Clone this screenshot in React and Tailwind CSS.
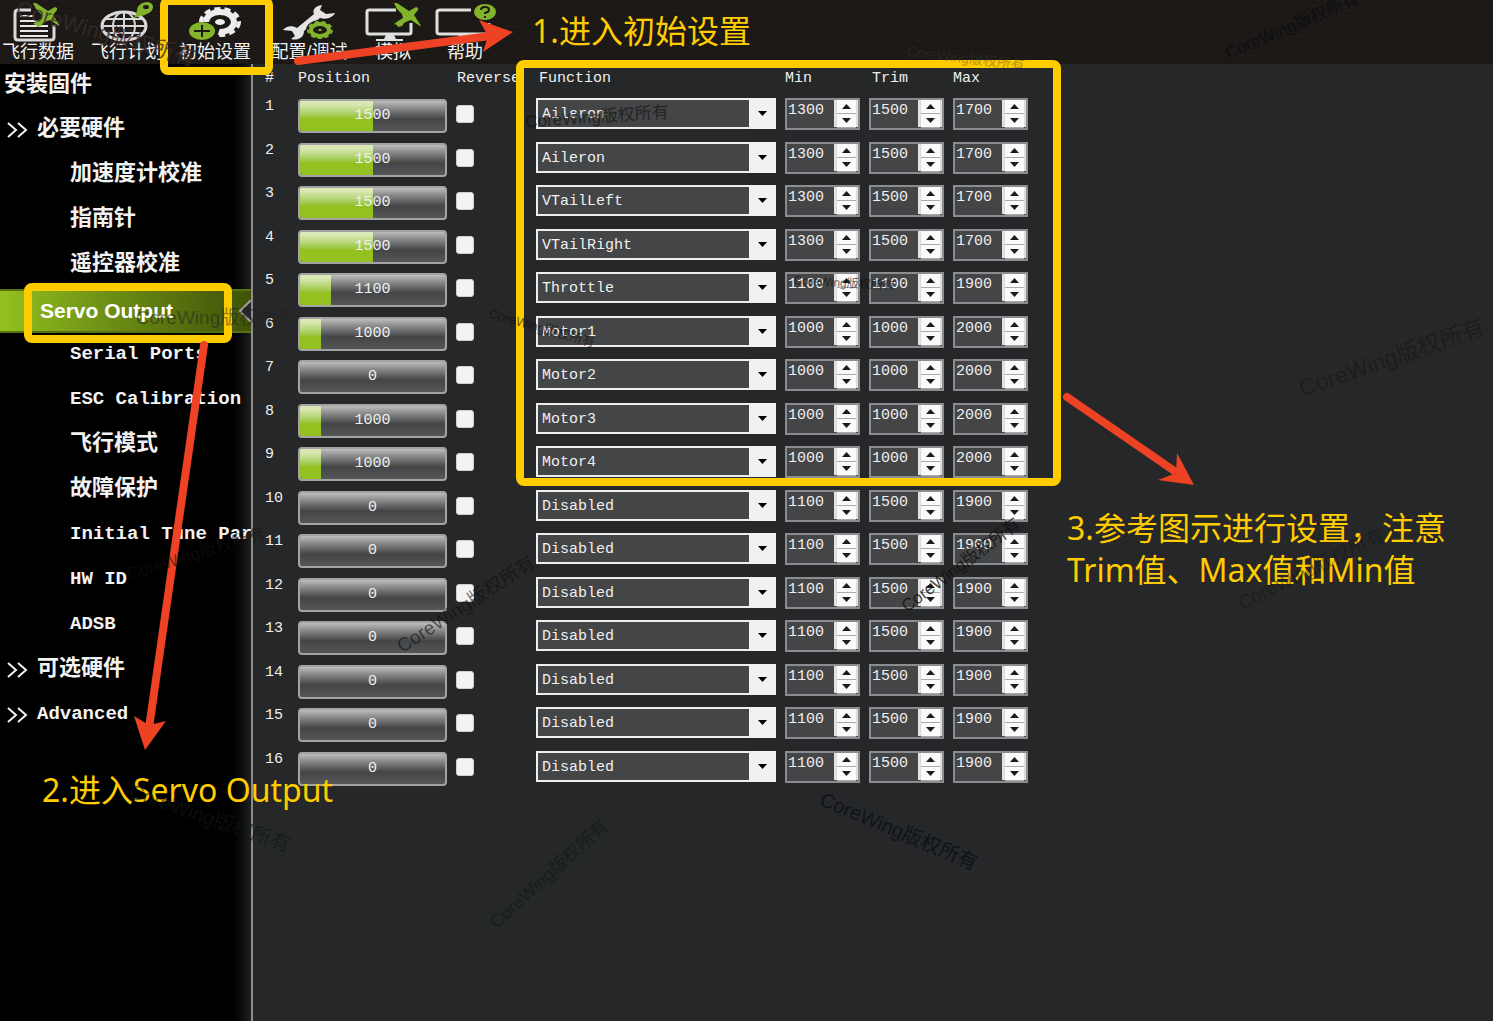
import React, { useState } from 'react';

const FUNCTIONS = [
  'Disabled', 'Aileron', 'VTailLeft', 'VTailRight', 'Throttle',
  'Motor1', 'Motor2', 'Motor3', 'Motor4',
];

const SERVOS = [
  { position: 1500, fn: 'Aileron', min: 1300, trim: 1500, max: 1700 },
  { position: 1500, fn: 'Aileron', min: 1300, trim: 1500, max: 1700 },
  { position: 1500, fn: 'VTailLeft', min: 1300, trim: 1500, max: 1700 },
  { position: 1500, fn: 'VTailRight', min: 1300, trim: 1500, max: 1700 },
  { position: 1100, fn: 'Throttle', min: 1100, trim: 1100, max: 1900 },
  { position: 1000, fn: 'Motor1', min: 1000, trim: 1000, max: 2000 },
  { position: 0, fn: 'Motor2', min: 1000, trim: 1000, max: 2000 },
  { position: 1000, fn: 'Motor3', min: 1000, trim: 1000, max: 2000 },
  { position: 1000, fn: 'Motor4', min: 1000, trim: 1000, max: 2000 },
  ...Array.from({ length: 7 }, () => ({ position: 0, fn: 'Disabled', min: 1100, trim: 1500, max: 1900 })),
];

// x / y is the centre of each mark
const WATERMARKS = [
  { x: 106, y: 34, angle: 16, size: 22, color: '#3a2c2ccc' },
  { x: 1292, y: 26, angle: -23, size: 17, color: '#0f0e16' },
  { x: 966, y: 58, angle: 7, size: 14, color: '#3c383566' },
  { x: 597, y: 117, angle: -4, size: 17, color: '#101010aa' },
  { x: 216, y: 317, angle: 0, size: 19, color: '#20202080' },
  { x: 542, y: 328, angle: 16, size: 13, color: '#101010aa' },
  { x: 844, y: 283, angle: 3, size: 12, color: '#101010aa' },
  { x: 466, y: 604, angle: -33, size: 19, color: '#10101099' },
  { x: 961, y: 565, angle: -37, size: 17, color: '#101010cc' },
  { x: 1392, y: 358, angle: -19, size: 23, color: '#221b1c' },
  { x: 1311, y: 569, angle: -26, size: 19, color: '#10101066' },
  { x: 899, y: 831, angle: 23, size: 20, color: '#10131c' },
  { x: 549, y: 874, angle: -42, size: 18, color: '#162016' },
  { x: 210, y: 818, angle: 19, size: 20, color: '#10181099' },
  { x: 196, y: 554, angle: -17, size: 17, color: '#12121299' },
];

const PLANE = 'm30 3 3 0 6 4 6 4 7-4 2 1 0 2-4 5 2 3 5 8-1 0-9-6-3 1-4 2-2 3-4 1-1-2-3-1 4-3 5-3-1-4-5-5z';

const DataIcon = () => (
  <svg width="54" height="42" viewBox="0 0 54 42" fill="none">
    <path d="M20 10H7q-3 0-3 3v24q0 3 3 3h33q3 0 3-3V25" stroke="#d9d9d9" strokeWidth="3" />
    <path d="M9 16h14M9 21h18M9 26h28M9 31h28M9 36h28" stroke="#e8e8e8" strokeWidth="2" />
    <path d={PLANE} transform="translate(-8 0)" fill="#83b32a" />
  </svg>
);

const PlanIcon = () => (
  <svg width="54" height="42" viewBox="0 0 54 42" fill="none">
    <g stroke="#d9d9d9" strokeWidth="2">
      <ellipse cx="24" cy="26" rx="22" ry="14" strokeWidth="3" />
      <ellipse cx="24" cy="26" rx="11" ry="14" />
      <path d="M24 12v28M2 26h44M6 19h36M6 33h36" />
    </g>
    <path d="M34 18c5-2 10-2 15-5 6-4 5-10-1-11-7 0-11 4-11 9z" fill="#83b32a" />
    <ellipse cx="46" cy="7" rx="3" ry="2" fill="#1c1917" />
  </svg>
);

const SetupIcon = () => (
  <svg width="54" height="42" viewBox="0 0 54 42" fill="none">
    <ellipse cx="32" cy="22" rx="14" ry="10" stroke="#ececec" strokeWidth="6" />
    <ellipse cx="32" cy="22" rx="19" ry="13" stroke="#ececec" strokeWidth="4" strokeDasharray="6 4" />
    <path d="M12 22h16l4 6-4 12H12z" fill="#1c1917" />
    <ellipse cx="32" cy="22" rx="5" ry="3" fill="#ececec" />
    <ellipse cx="14" cy="31" rx="13" ry="9" fill="#83b32a" />
    <path d="M6 31h16M14 25v12" stroke="#1c1917" strokeWidth="2" />
  </svg>
);

const TuneIcon = () => (
  <svg width="54" height="42" viewBox="0 0 54 42" fill="none">
    <path d="M40 5c-7 1-10 5-8 9L15 28c-5-3-11-2-14 2l9 1 3 5-4 3c6 2 13-1 13-8l16-13c7 2 13-1 15-5l-9 1-6-4z" fill="#e4e4e4" />
    <ellipse cx="38" cy="30" rx="14" ry="10" fill="#1c1917" />
    <ellipse cx="38" cy="30" rx="9" ry="6" stroke="#83b32a" strokeWidth="4" />
    <ellipse cx="38" cy="30" rx="12" ry="8" stroke="#83b32a" strokeWidth="2" strokeDasharray="4 3" />
    <ellipse cx="38" cy="30" rx="2" ry="1" fill="#83b32a" />
  </svg>
);

const SimulationIcon = () => (
  <svg width="58" height="42" viewBox="0 0 58 42" fill="none">
    <path d="M32 10H5q-2 0-2 2v20q0 2 2 2h40q2 0 2-2v-9" stroke="#e0e0e0" strokeWidth="3" />
    <path d="M22 35h8l2 4h7v2H12v-2h8z" fill="#e0e0e0" />
    <path d={PLANE} fill="#83b32a" />
  </svg>
);

const HelpIcon = () => (
  <svg width="62" height="42" viewBox="0 0 62 42" fill="none">
    <path d="M37 10H6q-3 0-3 2v20q0 2 3 2h46q3 0 3-2v-9" stroke="#e0e0e0" strokeWidth="3" />
    <path d="M25 35h8v4h8v2H16v-2h8z" fill="#e0e0e0" />
    <ellipse cx="51" cy="12" rx="11" ry="8" fill="#83b32a" />
    <path d="M47 10q0-3 4-3t4 3q0 2-4 3v1M51 16v2" stroke="#1c1917" strokeWidth="2" />
  </svg>
);

const TOOLS = [
  { label: '飞行数据', Icon: DataIcon, width: 'w-[76px]' },
  { label: '飞行计划', Icon: PlanIcon, width: 'w-[102px]' },
  { label: '初始设置', Icon: SetupIcon, width: 'w-[74px]' },
  { label: '配置/调试', Icon: TuneIcon, width: 'w-[114px]' },
  { label: '模拟', Icon: SimulationIcon, width: 'w-[54px]' },
  { label: '帮助', Icon: HelpIcon, width: 'w-[90px]' },
];

const MENU = [
  { label: '必要硬件', group: true },
  { label: '加速度计校准' },
  { label: '指南针' },
  { label: '遥控器校准' },
  { label: 'Servo Output', active: true },
  { label: 'Serial Ports' },
  { label: 'ESC Calibration' },
  { label: '飞行模式' },
  { label: '故障保护' },
  { label: 'Initial Tune Parameters' },
  { label: 'HW ID' },
  { label: 'ADSB' },
  { label: '可选硬件', group: true },
  { label: 'Advanced', group: true },
];

const Chevrons = () => (
  <svg width="22" height="16" viewBox="0 0 22 16" className="shrink-0" fill="none" stroke="#f2f2f2" strokeWidth="2">
    <path d="m1 1 8 7-8 7M11 1l8 7-8 7" />
  </svg>
);

function Toolbar() {
  return (
    <header className="flex h-[64px] shrink-0 bg-[#1b1816] bg-[repeating-linear-gradient(0deg,#1b1816_0px,#1b1816_2px,#1e1b18_3px,#191614_5px)] font-['Liberation_Sans','Noto_Sans_CJK_SC',sans-serif]">
      {TOOLS.map(({ label, Icon, width }) => (
        <button key={label} type="button" className={`flex shrink-0 flex-col items-center overflow-visible text-[18px] leading-5 whitespace-nowrap text-[#f2f2f2] ${width}`}>
          <Icon />
          <span>{label}</span>
        </button>
      ))}
    </header>
  );
}

function Sidebar() {
  return (
    <nav className="w-[253px] shrink-0 overflow-hidden border-r-2 border-[#8c8c8c] bg-linear-to-r from-black from-90% to-[#202121] text-[#f2f2f2]">
      <a href="#firmware" className="flex h-[43px] items-center pl-1 text-[22px] font-bold">安装固件</a>
      {MENU.map((item) => {
        if (item.active) {
          return (
            <a key={item.label} href="#servo" className="relative mt-[2px] -mb-px flex h-[44px] items-center border-y-2 border-[#557411] bg-linear-to-r from-[#94c11f] to-[#3f5208] pl-10 font-['Liberation_Sans'] text-[21px] font-bold text-white">
              {item.label}
              <svg width="12" height="22" viewBox="0 0 12 22" className="absolute right-0">
                <path d="M12 0 1 11l11 11z" fill="#262728" />
                <path d="M12 0 1 11l11 11" fill="none" stroke="#a0a0a0" strokeWidth="2" />
              </svg>
            </a>
          );
        }
        const size = /[a-z]/i.test(item.label) ? 'text-[19px]' : 'text-[22px]';
        return (
          <a key={item.label} href="#menu" className={`flex h-[45px] items-center font-bold whitespace-nowrap ${size} ${item.group ? 'gap-2 pl-[7px]' : 'pl-[70px]'}`}>
            {item.group && <Chevrons />}
            {item.label}
          </a>
        );
      })}
    </nav>
  );
}

function PositionBar({ value }) {
  const fill = Math.max(0, ((value - 800) / 1400) * 100);
  return (
    <div role="progressbar" aria-valuenow={value} aria-valuemin={800} aria-valuemax={2200} className="relative h-[34px] w-[149px] overflow-hidden rounded border-2 border-[#a3a3a3] bg-linear-to-b from-[#bdbdbd] via-[#444546] via-60% to-[#555657]">
      <div className="h-full bg-linear-to-b from-[#dbe9b5] from-10% via-[#93c11f] via-60% to-[#93c11f]" style={{ width: `${fill}%` }} />
      <span className="absolute inset-0 flex items-center justify-center">{value}</span>
    </div>
  );
}

function Spinner({ label, initial }) {
  const [value, setValue] = useState(initial);
  const step = 'flex h-[13px] w-[19px] items-center justify-center bg-[#fafafa] shadow-[0_1px_1px_#aaaaaa]';
  return (
    <div className="flex h-[32px] w-[75px] border-2 border-[#8b8c90] bg-[#444546]">
      <input type="text" inputMode="numeric" aria-label={label} value={value} onChange={(e) => setValue(e.target.value)} className="h-[22px] w-0 flex-1 pl-px outline-none" />
      <div className="mb-px flex w-[24px] flex-col items-center justify-center gap-px bg-[#e3e3e3]">
        <button type="button" aria-label={`${label} +`} onClick={() => setValue(Number(value) + 1)} className={step}>
          <svg width="9" height="5" viewBox="0 0 9 5"><path d="M0 5 4.5 0 9 5z" fill="#1c1c1c" /></svg>
        </button>
        <button type="button" aria-label={`${label} -`} onClick={() => setValue(Number(value) - 1)} className={step}>
          <svg width="9" height="5" viewBox="0 0 9 5"><path d="M0 0h9L4.5 5z" fill="#1c1c1c" /></svg>
        </button>
      </div>
    </div>
  );
}

function FunctionSelect({ label, initial }) {
  return (
    <div className="relative h-[31px] w-[240px]">
      <select aria-label={label} defaultValue={initial} className="h-full w-full appearance-none border-2 border-r-0 border-[#eeeeee] bg-[#444546] pt-1 pl-1 outline-none">
        {FUNCTIONS.map((name) => <option key={name}>{name}</option>)}
      </select>
      <span className="pointer-events-none absolute inset-y-0 right-0 flex w-[27px] items-center justify-center bg-[#f0f1f1]">
        <svg width="9" height="5" viewBox="0 0 9 5"><path d="M0 0h9L4.5 5z" fill="#000" /></svg>
      </span>
    </div>
  );
}

function ServoTable() {
  return (
    <table className="w-full table-fixed border-collapse text-left text-[15px] text-[#f0f0f0]">
      <colgroup>
        <col className="w-[45px]" />
        <col className="w-[158px]" />
        <col className="w-[80px]" />
        <col className="w-[249px]" />
        <col className="w-[84px]" />
        <col className="w-[84px]" />
        <col />
      </colgroup>
      <thead>
        <tr className="h-[30px] leading-5">
          <th className="pl-3 font-normal">#</th>
          <th className="font-normal">Position</th>
          <th className="pl-px font-normal">Reverse</th>
          <th className="pl-[3px] font-normal">Function</th>
          <th className="font-normal">Min</th>
          <th className="pl-[3px] font-normal">Trim</th>
          <th className="font-normal">Max</th>
        </tr>
      </thead>
      <tbody>
        {SERVOS.map((servo, i) => (
          <tr key={i} className="align-top odd:h-[44px] even:h-[43px]">
            <td className="pt-[3px] pl-3 leading-5">{i + 1}</td>
            <td className="pt-[5px]"><PositionBar value={servo.position} /></td>
            <td className="pt-[11px]">
              <input type="checkbox" aria-label={`Reverse ${i + 1}`} className="block size-[18px] appearance-none rounded-[3px] border border-[#cfcfcf] bg-[#f3f3f3] checked:bg-[#94c11f]" />
            </td>
            <td className="pt-1"><FunctionSelect label={`Function ${i + 1}`} initial={servo.fn} /></td>
            <td className="pt-1"><Spinner label={`Min ${i + 1}`} initial={servo.min} /></td>
            <td className="pt-1"><Spinner label={`Trim ${i + 1}`} initial={servo.trim} /></td>
            <td className="pt-1"><Spinner label={`Max ${i + 1}`} initial={servo.max} /></td>
          </tr>
        ))}
      </tbody>
    </table>
  );
}

// Tutorial notes laid over the ground station window
function Annotations() {
  const note = "absolute text-[32px] leading-[42px] whitespace-nowrap text-[#ffcc00] font-['Noto_Sans','Noto_Sans_CJK_SC',sans-serif]";
  const frame = 'absolute rounded-lg border-8 border-[#ffcc00]';
  return (
    <div className="pointer-events-none absolute inset-0 overflow-hidden">
      <div className={`${frame} -top-[3px] left-[160px] h-[78px] w-[113px]`} />
      <div className={`${frame} top-[283px] left-[24px] h-[60px] w-[208px]`} />
      <div className={`${frame} top-[60px] left-[516px] h-[426px] w-[545px]`} />
      <svg width="1200" height="760" viewBox="0 0 1200 760" className="absolute top-0 left-0" fill="#ed4224" stroke="#ed4224">
        <path d="M298 61 490 36M204 345 149 728M1067 397l106 73" fill="none" strokeWidth="8" strokeLinecap="round" />
        <path d="m513 32-34-12 9 16-5 16zM145 750l-11-34 15 9 17-4zM1194 485l-17-32-1 20-18 7z" stroke="none" />
      </svg>
      <p className={`${note} top-[10px] left-[532px]`}>1.进入初始设置</p>
      <p className={`${note} top-[769px] left-[42px]`}>2.进入Servo Output</p>
      <p className={`${note} top-[507px] left-[1067px]`}>3.参考图示进行设置，注意<br />Trim值、Max值和Min值</p>
      {WATERMARKS.map(({ x, y, angle, size, color }) => (
        <span
          key={`${x}-${y}`}
          className="absolute -translate-1/2 font-['Liberation_Sans','Noto_Sans_CJK_SC',sans-serif] leading-none whitespace-nowrap"
          style={{ left: x, top: y, rotate: `${angle}deg`, fontSize: size, color }}
        >
          CoreWing版权所有
        </span>
      ))}
    </div>
  );
}

export default function App() {
  return (
    <div className="relative flex min-h-screen flex-col overflow-hidden bg-[#262728] font-['Liberation_Mono','Noto_Sans_CJK_SC',monospace]">
      <Toolbar />
      <div className="flex flex-1">
        <Sidebar />
        <main className="min-w-0 flex-1">
          <ServoTable />
        </main>
      </div>
      <Annotations />
    </div>
  );
}
